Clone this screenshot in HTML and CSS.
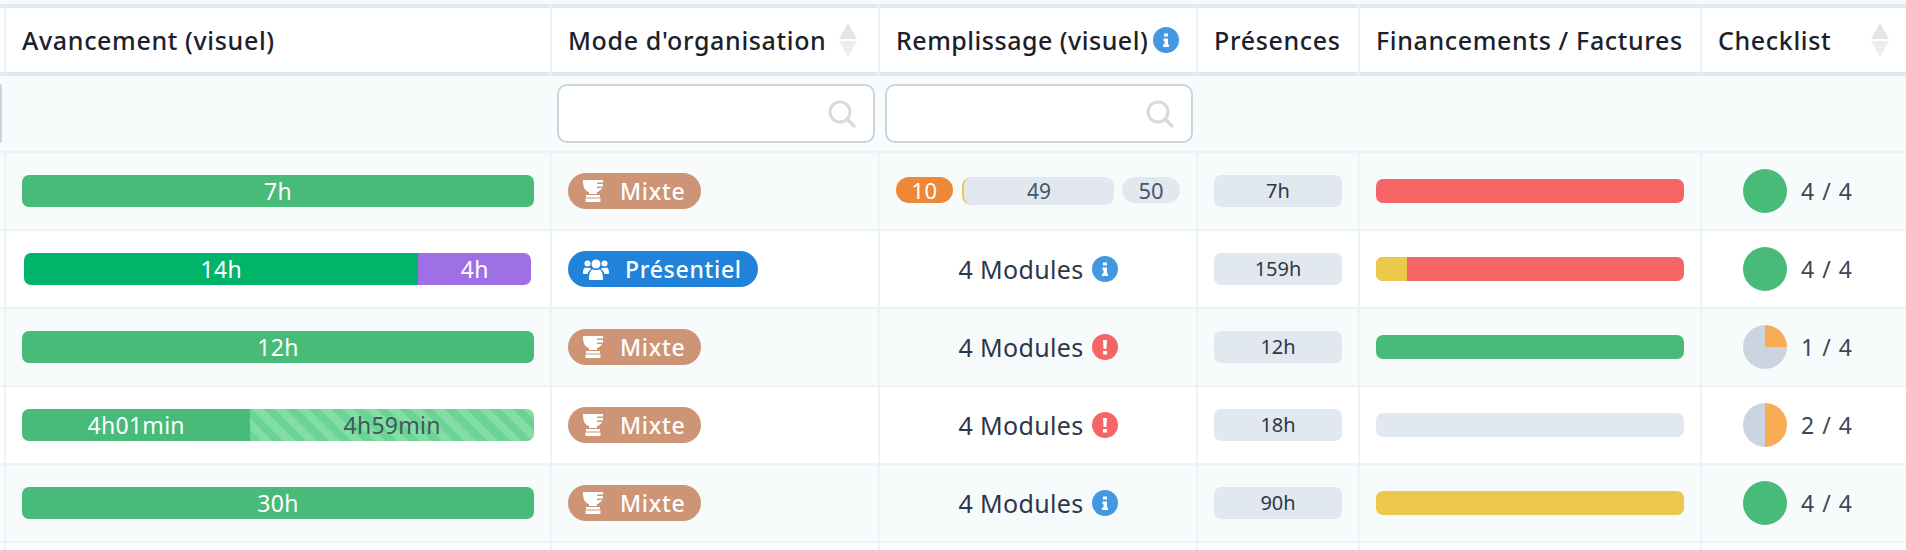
FILE: index.html
```html
<!DOCTYPE html>
<html lang="fr">
<head>
<meta charset="utf-8">
<title>Sessions</title>
<link rel="stylesheet" href="styles.css">
</head>
<body>
<svg class="defs" width="0" height="0" aria-hidden="true">
  <defs>
    <symbol id="trophy" viewBox="0 0 22 22">
      <path fill="currentColor" d="M1 0H21V2.500H15V4H21V6.500H15V8H20C19 10 17 11.500 15 12V14H7V12C3 11 1 8 1 0ZM4 15H18V17.500H4ZM3.500 18.500H18.500V22H3.500Z"/>
    </symbol>
    <symbol id="users" viewBox="0 0 26 21">
      <circle fill="currentColor" cx="13" cy="5" r="4.500"/>
      <circle fill="currentColor" cx="4.500" cy="4.500" r="3"/>
      <circle fill="currentColor" cx="21.500" cy="4.500" r="3"/>
      <path fill="currentColor" d="M6 20C6 13 8 10.500 10 10.500C11 11.200 15 11.200 16 10.500C18 10.500 20 13 20 20C20 20.600 19.500 21 19 21H7C6.500 21 6 20.600 6 20ZM0 13C0 10 1.500 8.500 3 8.500C4.500 9.200 5.500 9.200 7 8.800C7.500 9.300 7.800 9.800 8 10.200C6 11.500 4.800 13.500 4.500 15H1C.4 15 0 14.500 0 14ZM26 13C26 10 24.500 8.500 23 8.500C21.500 9.200 20.500 9.200 19 8.800C18.500 9.300 18.200 9.800 18 10.200C20 11.500 21.200 13.500 21.500 15H25C25.600 15 26 14.500 26 14Z"/>
    </symbol>
    <symbol id="info" viewBox="0 0 26 26">
      <circle fill="#4299e1" cx="13" cy="13" r="13"/>
      <path fill="#fff" d="M11 6.500H15V9.500H11ZM10.500 11.500H15V17.500H16V20H10V17.500H11.500V14H10.500Z"/>
    </symbol>
    <symbol id="alert" viewBox="0 0 26 26">
      <circle fill="#f56565" cx="13" cy="13" r="13"/>
      <path fill="#fff" d="M11 6H15L14.400 15H11.600ZM11 17H15V20.500H11Z"/>
    </symbol>
    <symbol id="search" viewBox="0 0 28 28">
      <circle fill="none" stroke="currentColor" stroke-width="3" cx="12" cy="12" r="10"/>
      <path fill="none" stroke="currentColor" stroke-width="3.500" stroke-linecap="round" d="M19.500 19.500L26 26"/>
    </symbol>
  </defs>
</svg>
<table class="grid">
  <colgroup>
    <col class="c-prev"><col class="c-progress"><col class="c-mode"><col class="c-fill"><col class="c-pres"><col class="c-fin"><col class="c-check">
  </colgroup>
  <thead>
    <tr class="head">
      <th></th>
      <th>Avancement (visuel)</th>
      <th><div class="th-flex th-mode"><span>Mode d'organisation</span><span class="sort"></span></div></th>
      <th><div class="th-flex th-fill"><span>Remplissage (visuel)</span><svg class="ic"><use href="#info"/></svg></div></th>
      <th>Présences</th>
      <th>Financements / Factures</th>
      <th><div class="th-flex th-check"><span>Checklist</span><span class="sort"></span></div></th>
    </tr>
    <tr class="filters">
      <td><div class="stub"></div></td>
      <td></td>
      <td class="f-cell"><div class="search"><svg class="search-ic"><use href="#search"/></svg></div></td>
      <td class="f-cell"><div class="search"><svg class="search-ic"><use href="#search"/></svg></div></td>
      <td></td><td></td><td></td>
    </tr>
  </thead>
  <tbody>
    <tr>
      <td></td>
      <td><div class="bar"><span class="seg green full">7h</span></div></td>
      <td><span class="pill mixte"><svg class="pi-t"><use href="#trophy"/></svg>Mixte</span></td>
      <td><div class="fill"><span class="fp orange">10</span><span class="fp mid">49</span><span class="fp rest">50</span></div></td>
      <td><div class="pres">7h</div></td>
      <td><div class="fin red"></div></td>
      <td><div class="chk"><span class="pie done"></span><span>4 / 4</span></div></td>
    </tr>
    <tr>
      <td></td>
      <td><div class="bar inset"><span class="seg emerald" style="width:77.8%">14h</span><span class="seg purple" style="width:22.2%">4h</span></div></td>
      <td><span class="pill pres-pill"><svg class="pi-u"><use href="#users"/></svg>Présentiel</span></td>
      <td><div class="mods">4 Modules<svg class="ic"><use href="#info"/></svg></div></td>
      <td><div class="pres">159h</div></td>
      <td><div class="fin red"><span class="fin-part yellow" style="width:10%"></span></div></td>
      <td><div class="chk"><span class="pie done"></span><span>4 / 4</span></div></td>
    </tr>
    <tr>
      <td></td>
      <td><div class="bar"><span class="seg green full">12h</span></div></td>
      <td><span class="pill mixte"><svg class="pi-t"><use href="#trophy"/></svg>Mixte</span></td>
      <td><div class="mods">4 Modules<svg class="ic"><use href="#alert"/></svg></div></td>
      <td><div class="pres">12h</div></td>
      <td><div class="fin green"></div></td>
      <td><div class="chk"><span class="pie q1"></span><span>1 / 4</span></div></td>
    </tr>
    <tr>
      <td></td>
      <td><div class="bar"><span class="seg green" style="width:44.6%">4h01min</span><span class="seg stripes" style="width:55.4%">4h59min</span></div></td>
      <td><span class="pill mixte"><svg class="pi-t"><use href="#trophy"/></svg>Mixte</span></td>
      <td><div class="mods">4 Modules<svg class="ic"><use href="#alert"/></svg></div></td>
      <td><div class="pres">18h</div></td>
      <td><div class="fin empty"></div></td>
      <td><div class="chk"><span class="pie q2"></span><span>2 / 4</span></div></td>
    </tr>
    <tr>
      <td></td>
      <td><div class="bar"><span class="seg green full">30h</span></div></td>
      <td><span class="pill mixte"><svg class="pi-t"><use href="#trophy"/></svg>Mixte</span></td>
      <td><div class="mods">4 Modules<svg class="ic"><use href="#info"/></svg></div></td>
      <td><div class="pres">90h</div></td>
      <td><div class="fin yellow"></div></td>
      <td><div class="chk"><span class="pie done"></span><span>4 / 4</span></div></td>
    </tr>
    <tr class="tail"><td></td><td></td><td></td><td></td><td></td><td></td><td></td></tr>
  </tbody>
</table>
</body>
</html>
```
FILE: styles.css
```css
html, body {
  margin: 0;
  height: 550px;
  overflow: hidden;
  background: #f7fafc;
}
body {
  padding-top: 4px;
  box-sizing: border-box;
  font-family: "Noto Sans", "Open Sans", sans-serif;
  color: #2d3748;
}
.defs { position: absolute; }
.grid {
  width: 1906px;
  table-layout: fixed;
  border-collapse: separate;
  border-spacing: 0;
  background: #fff;
}
.c-prev { width: 6px; }
.c-progress { width: 546px; }
.c-mode { width: 328px; }
.c-fill { width: 318px; }
.c-pres { width: 162px; }
.c-fin { width: 342px; }
.c-check { width: 204px; }

th, td {
  padding: 0 16px;
  border-right: 2px solid #edf2f7;
  box-sizing: border-box;
  vertical-align: middle;
}
th:first-child, td:first-child { padding: 0; }
th:last-child, td:last-child { border-right: 0; }

.head th {
  height: 72px;
  background: #fff;
  border-top: 4px solid #e2e8f0;
  border-bottom: 4px solid #e2e8f0;
  text-align: left;
  font-size: 25px;
  font-weight: 500;
  letter-spacing: .65px;
  white-space: nowrap;
  color: #1a202c;
}
.th-flex { display: flex; align-items: center; justify-content: space-between; }
.th-mode { margin-right: 5px; }
.th-fill { justify-content: flex-start; gap: 5px; letter-spacing: .5px; }
.th-check { margin-right: 1px; }
.sort {
  width: 18px;
  height: 34px;
  background:
    linear-gradient(to bottom right, transparent 49%, #e3e5e7 51%) 0 0 / 9px 16px no-repeat,
    linear-gradient(to bottom left, transparent 49%, #e3e5e7 51%) 9px 0 / 9px 16px no-repeat,
    linear-gradient(to top right, transparent 49%, #ebedee 51%) 0 18px / 9px 16px no-repeat,
    linear-gradient(to top left, transparent 49%, #ebedee 51%) 9px 18px / 9px 16px no-repeat;
}
.ic { width: 26px; height: 26px; flex: none; }

.filters td {
  height: 77px;
  background: #f8fbfc;
  border-right-color: transparent;
  border-bottom: 2px solid #edf2f7;
}
.filters td.f-cell { padding: 0 3px 0 5px; }
.stub {
  width: 2px;
  height: 59px;
  box-sizing: border-box;
  border-right: 2px solid #cbd5e0;
  border-radius: 0 8px 8px 0;
}
.search {
  height: 59px;
  box-sizing: border-box;
  border: 2px solid #cbd5e0;
  border-radius: 10px;
  background: #fff;
  display: flex;
  align-items: center;
  justify-content: flex-end;
  padding-right: 17px;
}
.search-ic { width: 28px; height: 28px; color: #d8dadd; }

tbody td {
  height: 78px;
  border-bottom: 2px solid #edf2f7;
  background: #fff;
}
tbody tr:nth-child(odd) td { background: #f8fbfc; }
.tail td { height: 7px; border-bottom: 0; }

.bar {
  display: flex;
  height: 32px;
  border-radius: 7px;
  overflow: hidden;
  font-size: 23px;
  letter-spacing: .3px;
  line-height: 32px;
}
.bar.inset { margin: 0 3px 0 2px; }
.seg { display: block; text-align: center; color: #fff; }
.seg.full { width: 100%; }
.green { background-color: #48bb78; }
.emerald { background-color: #00b56a; }
.purple { background-color: #9f6fe6; }
.stripes {
  color: #3f5a5d;
  background: repeating-linear-gradient(45deg, #6bd495 0 8px, #85dda6 8px 16px);
}

.pill {
  display: inline-flex;
  align-items: center;
  height: 36px;
  border-radius: 18px;
  color: #fff;
  font-size: 23px;
  font-weight: 500;
  letter-spacing: .7px;
  white-space: nowrap;
  vertical-align: middle;
}
.mixte { background: #cd9575; padding: 0 16px 0 14px; }
.pres-pill { background: #2182d9; padding: 0 16px 0 15px; }
.pi-t { width: 22px; height: 22px; margin-right: 16px; flex: none; }
.pi-u { width: 26px; height: 21px; margin-right: 16px; flex: none; }

.fill { display: flex; align-items: flex-start; font-size: 21px; }
.fp { display: block; flex: none; height: 26px; line-height: 26px; text-align: center; }
.orange { width: 57px; margin-right: 9px; background: #ed8936; border-radius: 13px; color: #fff; font-size: 22px; letter-spacing: .5px; }
.mid {
  width: 152px;
  height: 28px;
  line-height: 28px;
  margin-right: 8px;
  background: #e2e8f0;
  border-left: 2px solid #ecc94b;
  border-radius: 9px;
  box-sizing: border-box;
  color: #4a5568;
}
.rest { width: 58px; background: #e2e8f0; border-radius: 13px; color: #4a5568; font-size: 22px; }

.mods {
  display: flex;
  align-items: center;
  justify-content: center;
  gap: 8px;
  font-size: 25px;
  letter-spacing: .35px;
}
.pres {
  height: 32px;
  line-height: 32px;
  text-align: center;
  border-radius: 7px;
  background: #e2e8f0;
  font-size: 20px;
  color: #2d3748;
}
.fin { height: 24px; border-radius: 7px; overflow: hidden; }
.fin-part { display: block; height: 100%; }
.red { background: #f56565; }
.yellow { background: #ecc94b; }
.empty { background: #e2e8f0; }

.chk {
  display: flex;
  align-items: center;
  gap: 14px;
  padding-left: 25px;
  font-size: 23px;
  letter-spacing: 1px;
  white-space: nowrap;
  color: #3d4756;
}
.pie { display: block; width: 44px; height: 44px; border-radius: 50%; flex: none; }
.pie.done { background: #48bb78; }
.pie.q1 { background: conic-gradient(#f6ad55 0 25%, #cbd5e0 25% 100%); }
.pie.q2 { background: conic-gradient(#f6ad55 0 50%, #cbd5e0 50% 100%); }
```
